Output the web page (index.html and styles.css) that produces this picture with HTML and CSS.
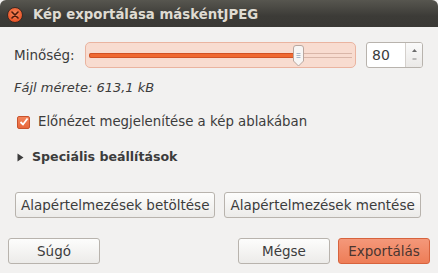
FILE: index.html
```html
<!DOCTYPE html>
<html lang="hu">
<head>
    <meta charset="UTF-8">
    <meta name="viewport" content="width=device-width, initial-scale=1.0">
    <title>Kép exportálása</title>
    <link rel="stylesheet" href="styles.css">
</head>
<body>
    <div class="window">
        <div class="titlebar">
            <span class="close-btn">
                <svg width="8" height="8" viewBox="0 0 8 8">
                    <path d="M1 1 L7 7 M7 1 L1 7" stroke="#4a1a0c" stroke-width="1.6" stroke-linecap="round"/>
                </svg>
            </span>
            <span class="title">Kép exportálása máskéntJPEG</span>
        </div>

        <div class="content">
            <div class="quality-row">
                <label class="quality-label">Minőség:</label>
                <div class="slider">
                    <div class="track">
                        <div class="track-fill"></div>
                    </div>
                    <svg class="handle" width="13" height="22" viewBox="0 0 13 22">
                        <path d="M1.5 3 Q1.5 0.5 4 0.5 L9 0.5 Q11.5 0.5 11.5 3 L11.5 16 L6.5 21 L1.5 16 Z" fill="#f7f6f5" stroke="#b9a79f" stroke-width="1"/>
                        <path d="M4.5 8.5 H8.5 M4.5 10.5 H8.5 M4.5 12.5 H8.5" stroke="#a9b8c8" stroke-width="1"/>
                    </svg>
                </div>
                <div class="spin">
                    <span class="spin-value">80</span>
                    <span class="spin-arrows">
                        <svg width="7" height="18" viewBox="0 0 7 18">
                            <path d="M1 6 L3.5 3 L6 6 Z" fill="#6b6b6b"/>
                            <path d="M1.5 13 H5.5" stroke="#888" stroke-width="1"/>
                        </svg>
                    </span>
                </div>
            </div>

            <p class="file-size">Fájl mérete: 613,1 kB</p>

            <div class="check-row">
                <span class="checkbox">
                    <svg width="10" height="10" viewBox="0 0 10 10">
                        <path d="M1.5 5 L4 7.5 L8.5 1.5" fill="none" stroke="#fff" stroke-width="1.8"/>
                    </svg>
                </span>
                <span>Előnézet megjelenítése a kép ablakában</span>
            </div>

            <div class="expander">
                <svg width="7" height="9" viewBox="0 0 7 9">
                    <path d="M0.5 0.5 L6.5 4.5 L0.5 8.5 Z" fill="#3c3c3c"/>
                </svg>
                <span class="expander-label">Speciális beállítások</span>
            </div>

            <div class="defaults-row">
                <button class="btn">Alapértelmezések betöltése</button>
                <button class="btn">Alapértelmezések mentése</button>
            </div>
        </div>

        <div class="actions">
            <button class="btn action">Súgó</button>
            <div class="actions-right">
                <button class="btn action">Mégse</button>
                <button class="btn action primary">Exportálás</button>
            </div>
        </div>
    </div>
</body>
</html>
```

FILE: styles.css
```css
* {
    box-sizing: border-box;
    margin: 0;
    padding: 0;
}

body {
    width: 438px;
    height: 273px;
    overflow: hidden;
    background: #f2f1f0;
    color: #3c3c3c;
    font-family: 'DejaVu Sans', 'Open Sans', sans-serif;
    font-size: 13.5px;
}

.window {
    height: 273px;
    display: flex;
    flex-direction: column;
}

/* Title bar */
.titlebar {
    height: 27px;
    display: flex;
    align-items: center;
    padding-left: 7px;
    background: linear-gradient(#57564f, #3c3b37 60%, #3a3935);
    border-radius: 6px 6px 0 0;
}

.close-btn {
    width: 16px;
    height: 16px;
    border-radius: 50%;
    background: radial-gradient(circle at 50% 40%, #f58a5c, #e9562a 70%, #c8451e);
    border: 1px solid #3a2a24;
    display: flex;
    align-items: center;
    justify-content: center;
    margin-top: 3px;
}

.title {
    margin-left: 10px;
    margin-top: 2px;
    color: #dfdbd2;
    font-weight: bold;
    font-size: 13.3px;
}

/* Main content */
.content {
    padding: 15px 15px 0 14px;
}

.quality-row {
    display: flex;
    align-items: center;
    height: 26px;
}

.quality-label {
    width: 71px;
    flex: none;
}

.slider {
    position: relative;
    width: 271px;
    height: 26px;
    background: #f8dcd0;
    border: 1px solid #eab4a0;
    border-radius: 5px;
    display: flex;
    align-items: center;
    padding: 0 3px;
}

.track {
    flex: 1;
    height: 5px;
    border-top: 1px solid #d9b6a8;
    border-bottom: 1px solid #d9b6a8;
    position: relative;
}

.track-fill {
    position: absolute;
    left: 0;
    top: -1px;
    width: 208px;
    height: 5px;
    background: #ef6a33;
    border: 1px solid #d25224;
    border-radius: 2px;
}

.handle {
    position: absolute;
    left: 206px;
    top: 2px;
}

.spin {
    margin-left: 10px;
    width: 57px;
    height: 26px;
    display: flex;
    border: 1px solid #b8b3ad;
    border-radius: 3px;
    background: #fff;
    overflow: hidden;
}

.spin-value {
    flex: 1;
    padding-left: 5px;
    display: flex;
    align-items: center;
    font-size: 14px;
}

.spin-arrows {
    width: 17px;
    border-left: 1px solid #d4d0cc;
    background: linear-gradient(#fafafa, #ebe9e7);
    display: flex;
    align-items: center;
    justify-content: center;
}

.file-size {
    margin-top: 11px;
    line-height: 18px;
    font-style: italic;
    font-size: 13px;
}

.check-row {
    margin-top: 16px;
    display: flex;
    align-items: center;
    line-height: 18px;
    font-size: 13.3px;
}

.checkbox {
    width: 13px;
    height: 13px;
    margin-left: 3px;
    margin-right: 8px;
    border: 1px solid #c9532c;
    border-radius: 2px;
    background: linear-gradient(#f2845a, #e8673b);
    display: flex;
    align-items: center;
    justify-content: center;
}

.expander {
    margin-top: 17px;
    display: flex;
    align-items: center;
    line-height: 18px;
    padding-left: 3px;
}

.expander-label {
    margin-left: 8px;
    font-weight: bold;
    font-size: 12.6px;
}

.defaults-row {
    margin-top: 26px;
    display: flex;
    gap: 9px;
    padding-left: 1px;
}

/* Buttons */
.btn {
    height: 26px;
    padding: 0 5px;
    font-family: inherit;
    font-size: 13.5px;
    color: #3c3c3c;
    border: 1px solid #b8b3ad;
    border-radius: 3px;
    background: linear-gradient(#fdfdfc, #ecebe9);
}

.actions {
    margin-top: auto;
    margin-bottom: 9px;
    padding: 0 8px;
    display: flex;
    justify-content: space-between;
}

.actions-right {
    display: flex;
    gap: 8px;
}

.action {
    width: 92px;
    height: 26px;
    padding: 0;
}

.primary {
    background: linear-gradient(#f4987a, #ee7d57);
    border-color: #d7633d;
    color: #4a3530;
}
```
